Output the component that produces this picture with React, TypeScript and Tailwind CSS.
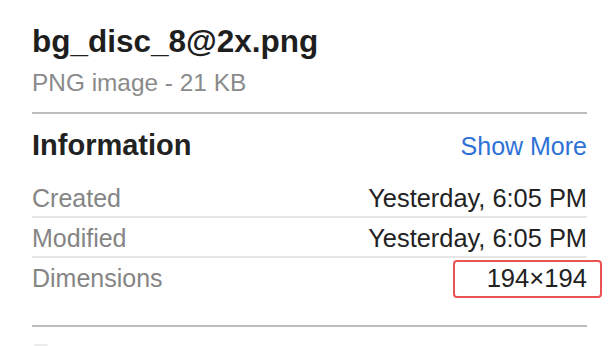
import React from "react";

const rows = [
  { label: "Created", value: "Yesterday, 6:05 PM" },
  { label: "Modified", value: "Yesterday, 6:05 PM" },
];

export default function App() {
  return (
    <div
      className="w-[616px] h-[346px] overflow-hidden bg-white pl-[32px] pr-[29px] pt-[23px]"
      style={{ fontFamily: '"Liberation Sans", Arial, sans-serif' }}
    >
      <div className="text-[31.5px] leading-[36px] font-bold text-[#1e1e1e]">bg_disc_8@2x.png</div>
      <div className="mt-[10px] text-[24.4px] leading-[28px] text-[#8a8a8a]">PNG image - 21 KB</div>
      <div className="mt-[15px] h-[2px] bg-[#bdbdbd]" />
      <div className="mt-[14px] flex items-baseline justify-between">
        <div className="text-[29px] leading-[34px] font-bold text-[#222222]">Information</div>
        <div className="text-[25px] leading-[34px] text-[#2f72d6]">Show More</div>
      </div>
      <div className="mt-[21px]">
        {rows.map((r) => (
          <div
            key={r.label}
            className="flex justify-between pb-[4px] pt-[6px] first:pt-0 border-b-2 border-[#e6e6e6] text-[25px] leading-[28px]"
          >
            <span className="text-[#858585]">{r.label}</span>
            <span className="text-[#222222] text-[25.4px]">{r.value}</span>
          </div>
        ))}
        <div className="relative flex justify-between pt-[6px] text-[25px] leading-[28px]">
          <span className="text-[#858585]">Dimensions</span>
          <span className="text-[#222222] text-[25.6px]">194×194</span>
          <div className="absolute top-[2px] right-[-15px] w-[149px] h-[38px] border-2 border-[#ea5353] rounded-[4px]" />
        </div>
      </div>
      <div className="mt-[33px] h-[2px] bg-[#bdbdbd]" />
      <div className="mt-[17px] ml-[2px] w-[14px] h-[2px] rounded-full bg-[#ececec]" />
    </div>
  );
}
